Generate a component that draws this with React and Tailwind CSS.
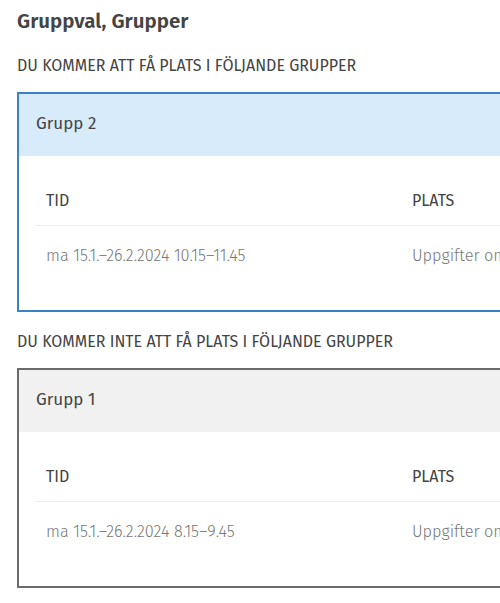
import React from "react";

function GroupBox({ title, time, variant }) {
  const blue = variant === "blue";
  return (
    <div
      className={`w-[640px] border-2 ${blue ? "border-[#3b82c4]" : "border-[#6b6b6b]"} bg-white`}
    >
      <div
        className={`h-[62px] flex items-center pl-[17px] pb-[3px] text-[17px] text-[#444] ${blue ? "bg-[#d8ebfb]" : "bg-[#f1f1f1]"}`}
      >
        {title}
      </div>
      <div className="px-[16px] pt-[20px] pb-[27px]">
        <div className="grid grid-cols-[366px_1fr] h-[50px] items-center border-b border-[#eeeeee] text-[16px] text-[#444]">
          <div className="pl-[11px]">TID</div>
          <div className="pl-[11px]">PLATS</div>
        </div>
        <div className="grid grid-cols-[366px_1fr] h-[57px] pt-[4px] items-center text-[16.3px] font-light text-[#777]">
          <div className="pl-[11px]">{time}</div>
          <div className="pl-[11px] whitespace-nowrap">Uppgifter om platsen saknas</div>
        </div>
      </div>
    </div>
  );
}

export default function App() {
  return (
    <div
      className="w-[500px] h-[603px] overflow-hidden bg-white pl-[17px] pt-[9px]"
      style={{ fontFamily: '"Fira Sans", "Noto Sans", sans-serif' }}
    >
      <h1 className="text-[20.5px] font-semibold text-[#444] leading-[24px]">Gruppval, Grupper</h1>
      <div className="mt-[23px] text-[16px] text-[#444] leading-[20px]">
        DU KOMMER ATT FÅ PLATS I FÖLJANDE GRUPPER
      </div>
      <div className="mt-[16px]">
        <GroupBox title="Grupp 2" time="ma 15.1.–26.2.2024 10.15–11.45" variant="blue" />
      </div>
      <div className="mt-[20px] text-[16px] text-[#444] leading-[20px]">
        DU KOMMER INTE ATT FÅ PLATS I FÖLJANDE GRUPPER
      </div>
      <div className="mt-[16px]">
        <GroupBox title="Grupp 1" time="ma 15.1.–26.2.2024 8.15–9.45" variant="gray" />
      </div>
    </div>
  );
}
